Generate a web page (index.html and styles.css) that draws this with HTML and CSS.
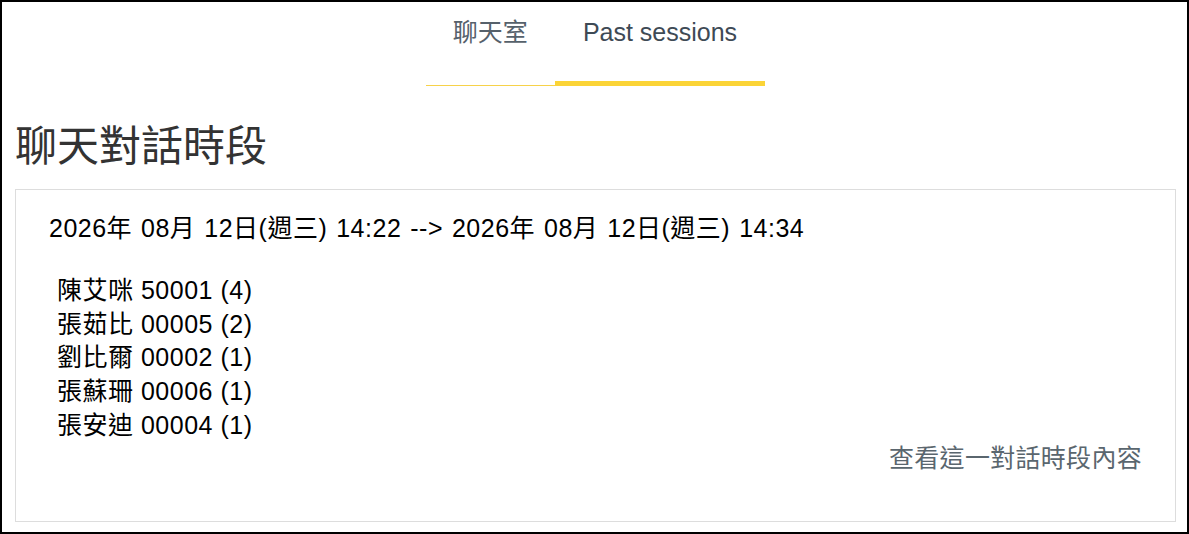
FILE: index.html
```html
<!DOCTYPE html>
<html lang="zh-Hant">
<head>
<meta charset="utf-8">
<title>聊天對話時段</title>
<link rel="stylesheet" href="styles.css">
</head>
<body>
<div class="frame">
  <nav class="tabs">
    <a class="tab">聊天室</a>
    <a class="tab active">Past sessions</a>
  </nav>
  <main class="content">
    <h1 class="title">聊天對話時段</h1>
    <section class="card">
      <div class="range">2026年 08月 12日(週三) 14:22 --&gt; 2026年 08月 12日(週三) 14:34</div>
      <ul class="people">
        <li>陳艾咪 50001 (4)</li>
        <li>張茹比 00005 (2)</li>
        <li>劉比爾 00002 (1)</li>
        <li>張蘇珊 00006 (1)</li>
        <li>張安迪 00004 (1)</li>
      </ul>
      <div class="actions"><a class="view-link">查看這一對話時段內容</a></div>
    </section>
  </main>
</div>
</body>
</html>
```
FILE: styles.css
```css
html, body {
  margin: 0;
  padding: 0;
  background: #fff;
}
body {
  font-family: "Liberation Sans", "Noto Sans CJK TC", sans-serif;
  font-size: 25px;
  line-height: 33.6px;
  color: #000;
}
.frame {
  box-sizing: border-box;
  width: 1189px;
  height: 534px;
  border: 2px solid #000;
  overflow: hidden;
}
.tabs {
  display: flex;
  justify-content: center;
  align-items: flex-end;
  padding: 14px 0 0 2px;
}
.tab {
  padding: 0 27px 35px;
  border-bottom: 1px solid #f7d24a;
  color: #56616b;
  cursor: pointer;
}
.tab.active {
  padding: 0 28px 31px;
  border-bottom: 5px solid #fbd437;
  color: #3e4a55;
}
.content {
  padding: 0 11px 0 13px;
}
.title {
  margin: 36px 0 17px;
  font-size: 42px;
  font-weight: normal;
  line-height: 50px;
  color: #333;
}
.card {
  border: 1px solid #ddd;
  padding: 22px 33px 45px;
  letter-spacing: 0.5px;
}
.range {
  margin-bottom: 29px;
  word-spacing: 1.5px;
}
.people {
  list-style: none;
  margin: 0;
  padding: 0 0 0 8px;
}
.actions {
  display: flex;
  justify-content: flex-end;
}
.view-link {
  color: #5a666e;
  letter-spacing: 0.3px;
  cursor: pointer;
}
```
